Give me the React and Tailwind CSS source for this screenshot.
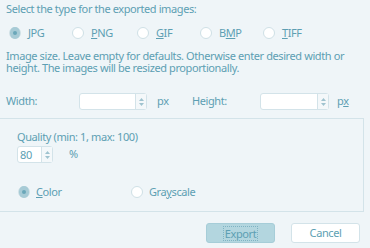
const fmts = [
  { pre: '', key: 'J', post: 'PG', checked: true, w: 'w-[63px]' },
  { pre: '', key: 'P', post: 'NG', w: 'w-[65px]' },
  { pre: '', key: 'G', post: 'IF', w: 'w-[63px]' },
  { pre: 'B', key: 'M', post: 'P', w: 'w-[63px]' },
  { pre: '', key: 'T', post: 'IFF', w: '' },
]

function Radio({ checked }) {
  return (
    <span className="w-[12px] h-[12px] rounded-full border border-[#cfe0e6] bg-white flex items-center justify-center shrink-0">
      {checked && <span className="w-[12px] h-[12px] rounded-full bg-[#a7cbd6] flex items-center justify-center"><span className="w-[4px] h-[4px] rounded-full bg-[#6aa7b9]" /></span>}
    </span>
  )
}

function Spin({ w, value }) {
  return (
    <div className={`flex h-[17px] border border-[#d3e3e9] rounded-[3px] bg-white ${w}`}>
      <div className="flex-1 text-[11px] leading-[15px] pl-[2px] text-[#5d9fb3]">{value}</div>
      <div className="w-[11px] border-l border-[#d3e3e9] bg-[#f4f8fa] flex flex-col items-center justify-center gap-[2px]">
        <svg width="5" height="3" viewBox="0 0 5 3"><path d="M0 3 L2.5 0 L5 3Z" fill="#9fc3cf" /></svg>
        <svg width="5" height="3" viewBox="0 0 5 3"><path d="M0 0 L2.5 3 L5 0Z" fill="#9fc3cf" /></svg>
      </div>
    </div>
  )
}

export default function App() {
  return (
    <div className="w-[370px] h-[248px] bg-[#eff5f8] text-[#5d9fb3] text-[11px] tracking-[-0.4px] overflow-hidden" style={{ fontFamily: '"Noto Sans", sans-serif' }}>
      <div className="pl-[6px] pt-[1px] leading-[15px]">Select the type for the exported images:</div>

      <div className="flex items-center pl-[9px] mt-[9px] h-[16px]">
        {fmts.map((f, i) => (
          <div key={i} className={`flex items-center gap-[7px] ${f.w}`}>
            <Radio checked={f.checked} />
            <span>{f.pre}<span className="underline">{f.key}</span>{f.post}</span>
          </div>
        ))}
      </div>

      <div className="pl-[6px] mt-[9px] leading-[12px] pr-[4px]">
        Image size. Leave empty for defaults. Otherwise enter desired width or height. The images will be resized proportionally.
      </div>

      <div className="flex items-center pl-[6px] mt-[19px] h-[17px]">
        <span className="w-[73px]">Width:</span>
        <Spin w="w-[68px]" />
        <span className="ml-[10px] w-[35px]">px</span>
        <span className="w-[68px]">Height:</span>
        <Spin w="w-[69px]" />
        <span className="ml-[8px]">p<span className="underline">x</span></span>
      </div>

      <div className="ml-[-2px] w-[366px] mt-[8px] h-[94px] border border-[#d3e3e9] pl-[18px] pt-[11px]">
        <div className="leading-[14px]">Quality (min: 1, max: 100)</div>
        <div className="flex items-center mt-[2px]">
          <Spin w="w-[36px]" value="80" />
          <span className="ml-[16px]">%</span>
        </div>
        <div className="flex items-center mt-[22px] h-[14px]">
          <div className="flex items-center gap-[6px] w-[113px] ml-[1px]">
            <Radio checked />
            <span><span className="underline">C</span>olor</span>
          </div>
          <div className="flex items-center gap-[6px]">
            <Radio />
            <span>Gra<span className="underline">y</span>scale</span>
          </div>
        </div>
      </div>

      <div className="flex justify-end gap-[16px] pr-[10px] mt-[11px]">
        <div className="w-[69px] h-[20px] rounded-[3px] bg-[#b3d6df] border border-[#a6cdd8] flex items-center justify-center">
          <span className="outline outline-1 outline-dotted outline-[#7fb3c3] px-[1px] leading-[13px]">Export</span>
        </div>
        <div className="w-[69px] h-[20px] rounded-[3px] bg-white border border-[#d3e3e9] flex items-center justify-center">Cancel</div>
      </div>
    </div>
  )
}
